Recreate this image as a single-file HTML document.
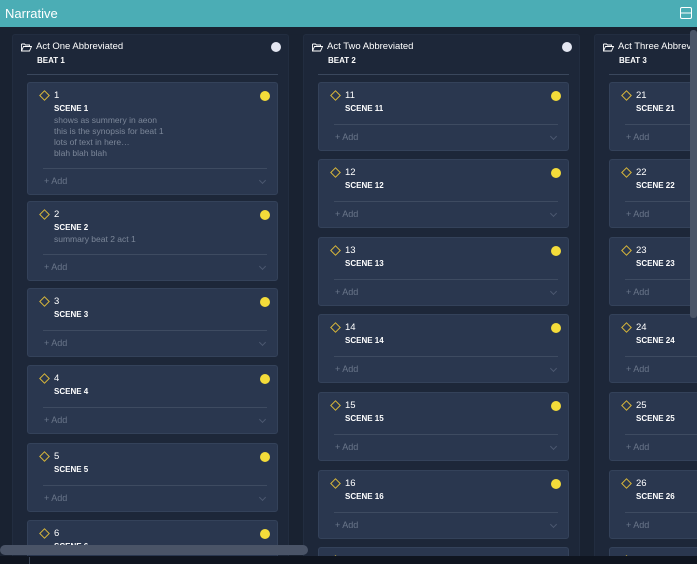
<!DOCTYPE html>
<html style="width:697px;height:564px;overflow:hidden"><head><meta charset="utf-8"><style>
*{box-sizing:border-box;margin:0;padding:0}
body{width:697px;height:564px;overflow:hidden;background:#192231;font-family:"Liberation Sans",sans-serif;position:relative}
.top{position:absolute;left:0;top:0;width:697px;height:27px;background:#4badb5;color:#fff;font-size:13px;line-height:27px;padding-left:5px}
.col{position:absolute;top:34px;width:277px;height:522px;overflow:hidden;background:#1d2739;border:1px solid #222d40;border-bottom:none;border-radius:3px 3px 0 0}
.ch{position:absolute;left:8px;top:6px;color:#fff;font-size:9.5px;white-space:nowrap}
.ch svg{position:absolute;left:0;top:2px}
.ch .t{position:absolute;left:15px;top:0;white-space:nowrap}
.ch .b{position:absolute;left:16px;top:15px;font-size:8px;font-weight:bold;white-space:nowrap}
.wd{position:absolute;right:7px;top:7px;width:10px;height:10px;border-radius:50%;background:#e4e7f2}
.hd{position:absolute;left:14px;top:39px;width:251px;height:1px;background:#3a475c}
.card{position:absolute;left:14px;width:251px;background:#2a374f;border:1px solid #34425a;border-radius:3px;padding:6px 0 0 0}
.n{height:13px;line-height:13px;color:#fff;font-size:9.5px;padding-left:26px;position:relative}
.n svg{position:absolute;left:11px;top:1px}
.n i{position:absolute;right:7px;top:2px;width:10px;height:10px;border-radius:50%;background:#f4dc3a}
.s{height:13px;line-height:13px;color:#fff;font-size:8px;font-weight:bold;padding-left:26px}
.sm{line-height:11px;color:#7c8799;font-size:8.5px;padding-left:26px}
.dv{margin:9px 10px 0 15px;height:1px;background:#3e4b61}
.ad{height:25px;line-height:25px;color:#6a768a;font-size:9px;padding-left:16px;position:relative}
.ad:after{content:"";position:absolute;right:12px;top:9px;width:4px;height:4px;border-right:1px solid #4c5870;border-bottom:1px solid #4c5870;transform:rotate(45deg)}
</style></head><body>
<div class="top">Narrative<svg style="position:absolute;right:5px;top:7px" width="12" height="12" viewBox="0 0 12 12"><rect x="0.5" y="0.5" width="11" height="11" rx="1.5" fill="none" stroke="#fff"/><line x1="0.5" y1="6" x2="11.5" y2="6" stroke="#fff"/></svg></div>

<div class="col" style="left:12px">
<div class="ch"><svg width="11" height="9" viewBox="0 0 11 9"><path d="M0.5 1h3l1 1h4v1.5M0.5 1v7h8l2-4.5h-8l-2 4.5" fill="none" stroke="#fff" stroke-width="0.9"/></svg><span class="t">Act One Abbreviated</span><span class="b">BEAT 1</span></div><div class="wd"></div><div class="hd"></div>
<div class="card" style="top:47px"><div class="n"><svg width="11" height="11" viewBox="0 0 11 11"><path d="M5.5 0.8L10.2 5.5 5.5 10.2 0.8 5.5z" fill="none" stroke="#d9b73a"/></svg>1<i></i></div><div class="s">SCENE 1</div><div class="sm">shows as summery in aeon<br>this is the synopsis for beat 1<br>lots of text in here…<br>blah blah blah</div><div class="dv"></div><div class="ad">+ Add</div></div>
<div class="card" style="top:166px"><div class="n"><svg width="11" height="11" viewBox="0 0 11 11"><path d="M5.5 0.8L10.2 5.5 5.5 10.2 0.8 5.5z" fill="none" stroke="#d9b73a"/></svg>2<i></i></div><div class="s">SCENE 2</div><div class="sm">summary beat 2 act 1</div><div class="dv"></div><div class="ad">+ Add</div></div>
<div class="card" style="top:253px"><div class="n"><svg width="11" height="11" viewBox="0 0 11 11"><path d="M5.5 0.8L10.2 5.5 5.5 10.2 0.8 5.5z" fill="none" stroke="#d9b73a"/></svg>3<i></i></div><div class="s">SCENE 3</div><div class="dv"></div><div class="ad">+ Add</div></div>
<div class="card" style="top:330px"><div class="n"><svg width="11" height="11" viewBox="0 0 11 11"><path d="M5.5 0.8L10.2 5.5 5.5 10.2 0.8 5.5z" fill="none" stroke="#d9b73a"/></svg>4<i></i></div><div class="s">SCENE 4</div><div class="dv"></div><div class="ad">+ Add</div></div>
<div class="card" style="top:408px"><div class="n"><svg width="11" height="11" viewBox="0 0 11 11"><path d="M5.5 0.8L10.2 5.5 5.5 10.2 0.8 5.5z" fill="none" stroke="#d9b73a"/></svg>5<i></i></div><div class="s">SCENE 5</div><div class="dv"></div><div class="ad">+ Add</div></div>
<div class="card" style="top:485px"><div class="n"><svg width="11" height="11" viewBox="0 0 11 11"><path d="M5.5 0.8L10.2 5.5 5.5 10.2 0.8 5.5z" fill="none" stroke="#d9b73a"/></svg>6<i></i></div><div class="s">SCENE 6</div><div class="dv"></div><div class="ad">+ Add</div></div>
</div>

<div class="col" style="left:303px">
<div class="ch"><svg width="11" height="9" viewBox="0 0 11 9"><path d="M0.5 1h3l1 1h4v1.5M0.5 1v7h8l2-4.5h-8l-2 4.5" fill="none" stroke="#fff" stroke-width="0.9"/></svg><span class="t">Act Two Abbreviated</span><span class="b">BEAT 2</span></div><div class="wd"></div><div class="hd"></div>
<div class="card" style="top:47px"><div class="n"><svg width="11" height="11" viewBox="0 0 11 11"><path d="M5.5 0.8L10.2 5.5 5.5 10.2 0.8 5.5z" fill="none" stroke="#d9b73a"/></svg>11<i></i></div><div class="s">SCENE 11</div><div class="dv"></div><div class="ad">+ Add</div></div>
<div class="card" style="top:124px"><div class="n"><svg width="11" height="11" viewBox="0 0 11 11"><path d="M5.5 0.8L10.2 5.5 5.5 10.2 0.8 5.5z" fill="none" stroke="#d9b73a"/></svg>12<i></i></div><div class="s">SCENE 12</div><div class="dv"></div><div class="ad">+ Add</div></div>
<div class="card" style="top:202px"><div class="n"><svg width="11" height="11" viewBox="0 0 11 11"><path d="M5.5 0.8L10.2 5.5 5.5 10.2 0.8 5.5z" fill="none" stroke="#d9b73a"/></svg>13<i></i></div><div class="s">SCENE 13</div><div class="dv"></div><div class="ad">+ Add</div></div>
<div class="card" style="top:279px"><div class="n"><svg width="11" height="11" viewBox="0 0 11 11"><path d="M5.5 0.8L10.2 5.5 5.5 10.2 0.8 5.5z" fill="none" stroke="#d9b73a"/></svg>14<i></i></div><div class="s">SCENE 14</div><div class="dv"></div><div class="ad">+ Add</div></div>
<div class="card" style="top:357px"><div class="n"><svg width="11" height="11" viewBox="0 0 11 11"><path d="M5.5 0.8L10.2 5.5 5.5 10.2 0.8 5.5z" fill="none" stroke="#d9b73a"/></svg>15<i></i></div><div class="s">SCENE 15</div><div class="dv"></div><div class="ad">+ Add</div></div>
<div class="card" style="top:435px"><div class="n"><svg width="11" height="11" viewBox="0 0 11 11"><path d="M5.5 0.8L10.2 5.5 5.5 10.2 0.8 5.5z" fill="none" stroke="#d9b73a"/></svg>16<i></i></div><div class="s">SCENE 16</div><div class="dv"></div><div class="ad">+ Add</div></div>
<div class="card" style="top:512px"><div class="n"><svg width="11" height="11" viewBox="0 0 11 11"><path d="M5.5 0.8L10.2 5.5 5.5 10.2 0.8 5.5z" fill="none" stroke="#d9b73a"/></svg>17<i></i></div><div class="s">SCENE 17</div><div class="dv"></div><div class="ad">+ Add</div></div>
</div>

<div class="col" style="left:594px">
<div class="ch"><svg width="11" height="9" viewBox="0 0 11 9"><path d="M0.5 1h3l1 1h4v1.5M0.5 1v7h8l2-4.5h-8l-2 4.5" fill="none" stroke="#fff" stroke-width="0.9"/></svg><span class="t">Act Three Abbreviated</span><span class="b">BEAT 3</span></div><div class="wd"></div><div class="hd"></div>
<div class="card" style="top:47px"><div class="n"><svg width="11" height="11" viewBox="0 0 11 11"><path d="M5.5 0.8L10.2 5.5 5.5 10.2 0.8 5.5z" fill="none" stroke="#d9b73a"/></svg>21<i></i></div><div class="s">SCENE 21</div><div class="dv"></div><div class="ad">+ Add</div></div>
<div class="card" style="top:124px"><div class="n"><svg width="11" height="11" viewBox="0 0 11 11"><path d="M5.5 0.8L10.2 5.5 5.5 10.2 0.8 5.5z" fill="none" stroke="#d9b73a"/></svg>22<i></i></div><div class="s">SCENE 22</div><div class="dv"></div><div class="ad">+ Add</div></div>
<div class="card" style="top:202px"><div class="n"><svg width="11" height="11" viewBox="0 0 11 11"><path d="M5.5 0.8L10.2 5.5 5.5 10.2 0.8 5.5z" fill="none" stroke="#d9b73a"/></svg>23<i></i></div><div class="s">SCENE 23</div><div class="dv"></div><div class="ad">+ Add</div></div>
<div class="card" style="top:279px"><div class="n"><svg width="11" height="11" viewBox="0 0 11 11"><path d="M5.5 0.8L10.2 5.5 5.5 10.2 0.8 5.5z" fill="none" stroke="#d9b73a"/></svg>24<i></i></div><div class="s">SCENE 24</div><div class="dv"></div><div class="ad">+ Add</div></div>
<div class="card" style="top:357px"><div class="n"><svg width="11" height="11" viewBox="0 0 11 11"><path d="M5.5 0.8L10.2 5.5 5.5 10.2 0.8 5.5z" fill="none" stroke="#d9b73a"/></svg>25<i></i></div><div class="s">SCENE 25</div><div class="dv"></div><div class="ad">+ Add</div></div>
<div class="card" style="top:435px"><div class="n"><svg width="11" height="11" viewBox="0 0 11 11"><path d="M5.5 0.8L10.2 5.5 5.5 10.2 0.8 5.5z" fill="none" stroke="#d9b73a"/></svg>26<i></i></div><div class="s">SCENE 26</div><div class="dv"></div><div class="ad">+ Add</div></div>
<div class="card" style="top:512px"><div class="n"><svg width="11" height="11" viewBox="0 0 11 11"><path d="M5.5 0.8L10.2 5.5 5.5 10.2 0.8 5.5z" fill="none" stroke="#d9b73a"/></svg>27<i></i></div><div class="s">SCENE 27</div><div class="dv"></div><div class="ad">+ Add</div></div>
</div>

<div style="position:absolute;left:690px;top:30px;width:7px;height:288px;background:#4a5568;border-radius:3px"></div>
<div style="position:absolute;left:0;top:556px;width:697px;height:8px;background:#0f1520"></div>
<div style="position:absolute;left:29px;top:557px;width:1px;height:7px;background:#3a4558"></div>
<div style="position:absolute;left:0;top:545px;width:308px;height:10px;background:#4a5467;border-radius:5px"></div>
</body></html>
